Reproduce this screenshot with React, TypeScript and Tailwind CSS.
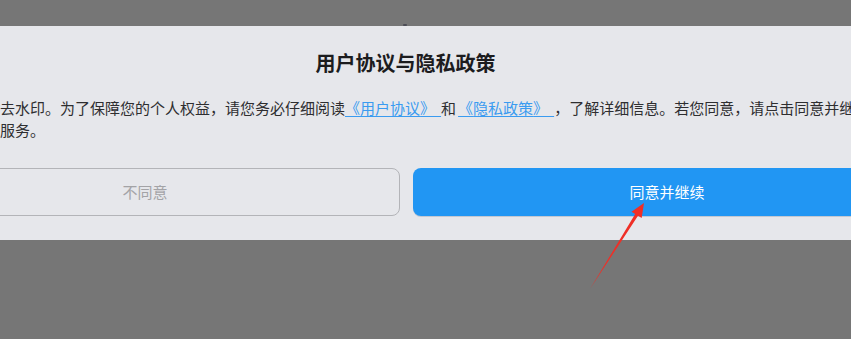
import React from 'react';

const font = { fontFamily: '"Noto Sans CJK SC", "Noto Sans", sans-serif' };

function Arrow() {
  return (
    <svg className="pointer-events-none absolute left-0 top-0" width="851" height="339" viewBox="0 0 851 339">
      <polygon
        points="644,203 641.7,218.1 638,215.8 590,289 635.2,214 631.5,211.7"
        fill="#ef2f27"
      />
    </svg>
  );
}

function DocLink({ name, className = '' }: { name: string; className?: string }) {
  return (
    <a className={`text-[#3a9bf0] underline underline-offset-2 ${className}`}>
      《{name}<span className="tracking-[6px]">》</span>
    </a>
  );
}

export default function App() {
  return (
    <div className="relative h-[339px] w-[851px] overflow-hidden bg-[#767676] pt-[26px]" style={font}>
      <span className="absolute left-[403px] top-[24px] h-[2px] w-[4px] rounded-full bg-[#4c4c56]" />

      <div className="-ml-[126px] w-[1063px] bg-[#e6e7eb] px-4 pb-6 pt-[23px] [text-spacing-trim:space-all]">
        <h2 className="text-center text-[20px] font-bold leading-[28px] text-[#1c1c1e]">用户协议与隐私政策</h2>

        <p className="mt-5 whitespace-nowrap pl-[5px] text-[15px] leading-[22px] text-[#2e2e30]">
          感谢您使用一键去水印。为了保障您的个人权益，请您务必仔细阅读
          <DocLink name="用户协议" />和<DocLink name="隐私政策" className="ml-[2px]" />
          ，了解详细信息。若您同意，请点击同意并继续使用
          <br />
          一键去水印相关服务。
        </p>

        <div className="mt-[27px] flex gap-[13px]">
          <button className="h-12 flex-1 rounded-lg border border-[#b3b4b8] text-[15px] text-[#a3a3a6]">
            不同意
          </button>
          <button className="h-12 flex-1 rounded-lg bg-[#2196f3] text-[15px] text-white shadow-[0_1px_0_#c3c8d2]">
            同意并继续
          </button>
        </div>
      </div>

      <Arrow />
    </div>
  );
}
